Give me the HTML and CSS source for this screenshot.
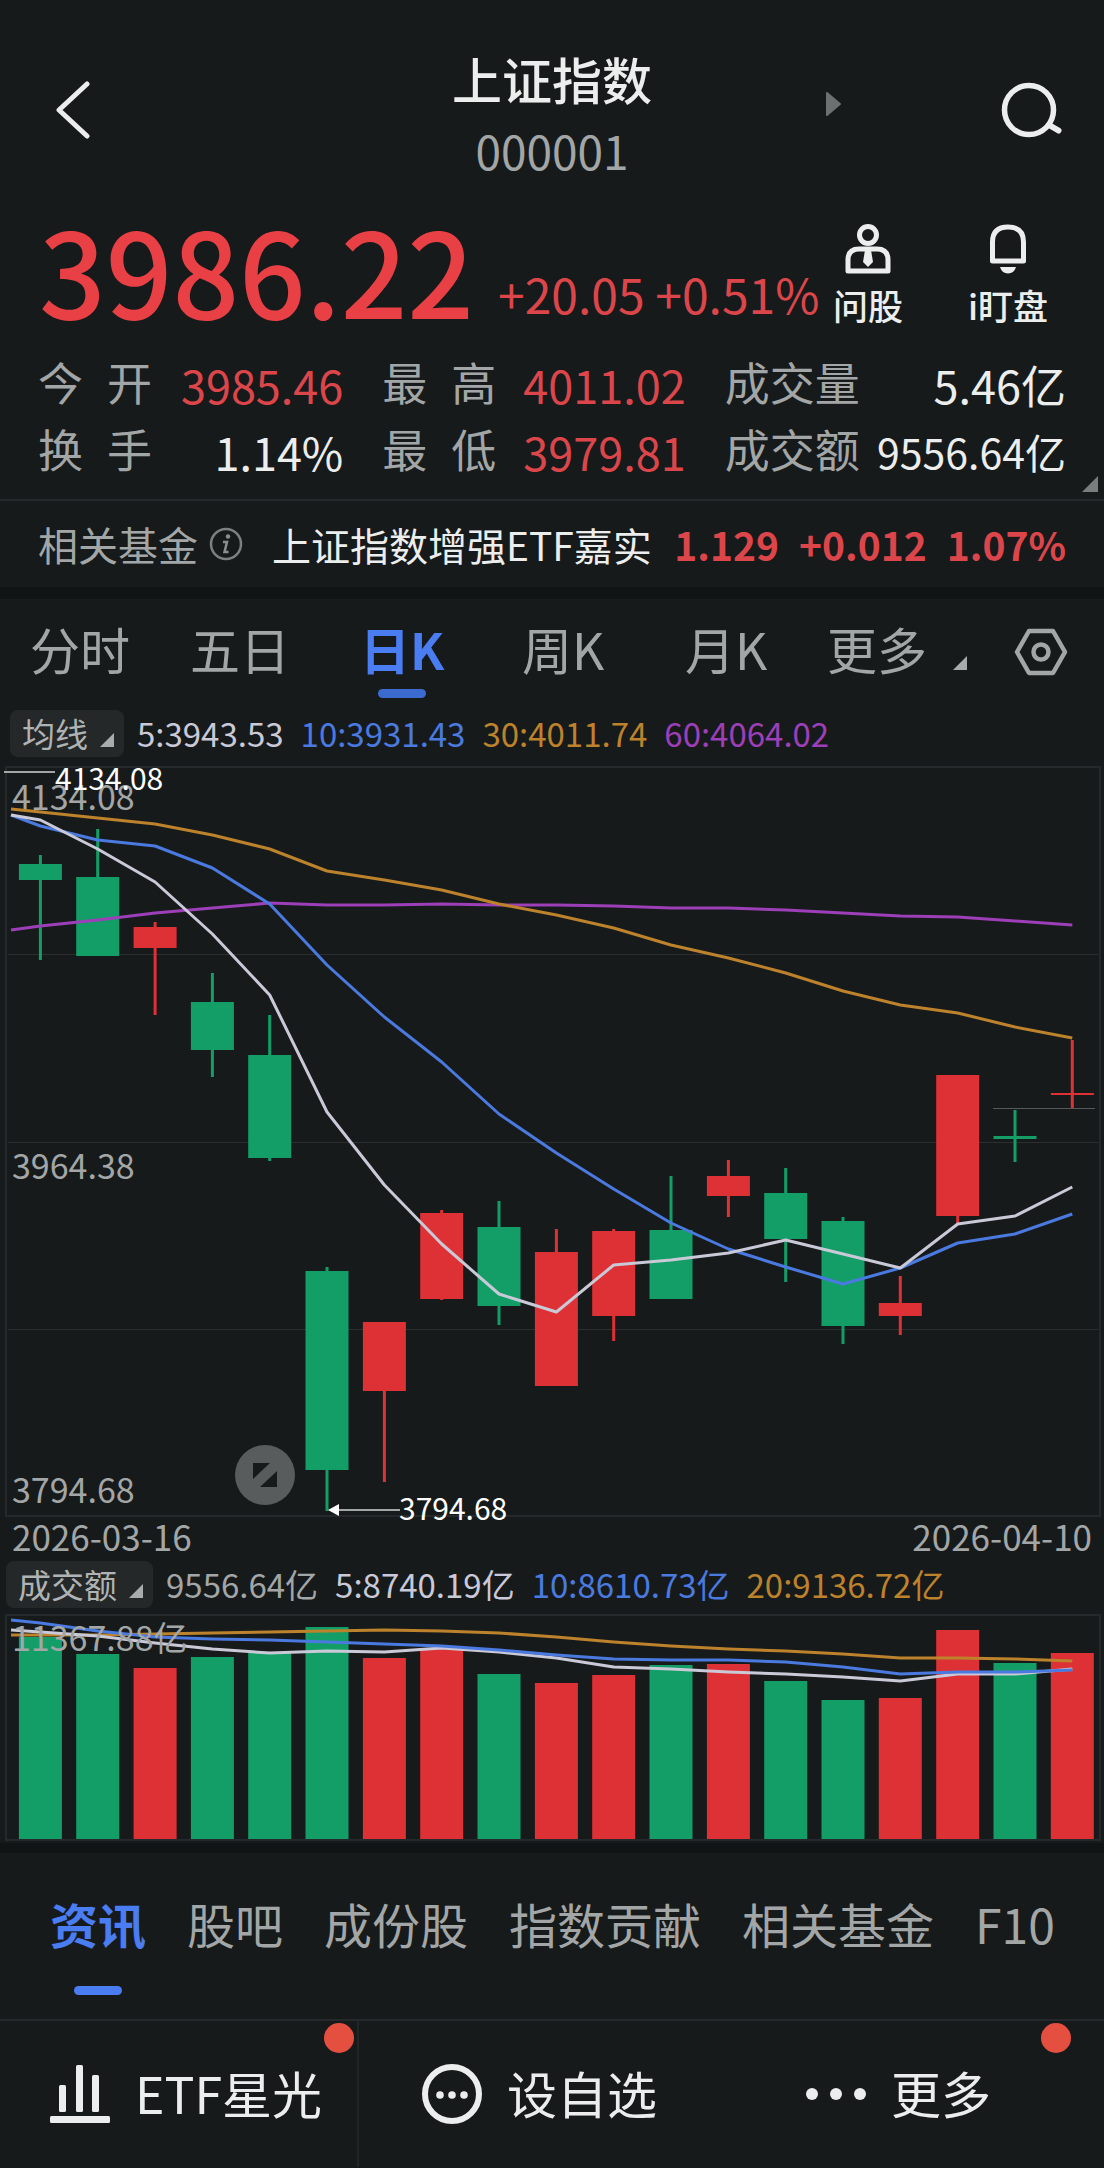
FILE: index.html
```html
<!DOCTYPE html>
<html lang="zh-CN">
	<head>
		<meta charset="utf-8">
		<meta name="viewport" content="width=device-width, initial-scale=1">
		<title>上证指数 000001</title>
		<link rel="stylesheet" href="styles.css">
	</head>
	<body>
		<header class="head">
			<button class="iconBtn back" aria-label="返回">
				<svg width="36" height="60" viewBox="0 0 36 60"><path d="M33 4L5 30L33 56" fill="none" stroke="#eceeee" stroke-width="5" stroke-linecap="round" stroke-linejoin="round"/></svg>
			</button>
			<div class="title">
				<h1>上证指数</h1>
				<p>000001</p>
			</div>
			<button class="iconBtn next" aria-label="下一只">
				<svg width="17" height="26" viewBox="0 0 17 26"><path d="M2 2L15 13L2 24Z" fill="#6d7070" stroke="#6d7070" stroke-width="2" stroke-linejoin="round"/></svg>
			</button>
			<button class="iconBtn search" aria-label="搜索">
				<svg width="62" height="58" viewBox="0 0 62 58"><circle cx="29" cy="29" r="24.5" fill="none" stroke="#eceeee" stroke-width="5.5"/><path d="M49 44L58.500 49.500" stroke="#eceeee" stroke-width="6" stroke-linecap="round"/></svg>
			</button>
		</header>

		<section class="price">
			<strong>3986.22</strong>
			<span class="change">+20.05 +0.51%</span>
			<div class="tools">
				<button>
					<svg width="50" height="52" viewBox="0 0 50 52"><g fill="none" stroke="#eceeee" stroke-width="5" stroke-linejoin="round"><circle cx="25" cy="13" r="8.500"/><path d="M5 49V38Q5 27 16 27H34Q45 27 45 38V49Z"/></g><path d="M22 28H28L30 40L25 45L20 40Z" fill="#eceeee"/></svg>
					<span>问股</span>
				</button>
				<button>
					<svg width="50" height="52" viewBox="0 0 50 52"><path d="M9.500 39V20Q9.500 5 25 5Q40.500 5 40.500 20V39Z" fill="none" stroke="#eceeee" stroke-width="5" stroke-linejoin="round"/><path d="M17 45H33Q31 51.500 25 51.500Q19 51.500 17 45Z" fill="#eceeee"/></svg>
					<span>i盯盘</span>
				</button>
			</div>
		</section>

		<dl class="stats">
			<div><dt><span>今</span><span>开</span></dt><dd class="up">3985.46</dd></div>
			<div><dt><span>最</span><span>高</span></dt><dd class="up">4011.02</dd></div>
			<div><dt>成交量</dt><dd>5.46亿</dd></div>
			<div><dt><span>换</span><span>手</span></dt><dd>1.14%</dd></div>
			<div><dt><span>最</span><span>低</span></dt><dd class="up">3979.81</dd></div>
			<div><dt>成交额</dt><dd class="long">9556.64亿</dd></div>
		</dl>

		<a class="fund" href="#fund">
			<span class="fundLabel">相关基金</span>
			<svg class="info" width="36" height="36" viewBox="0 0 36 36"><circle cx="18" cy="18" r="15" fill="none" stroke="#7d8080" stroke-width="2.500"/><circle cx="20" cy="10.500" r="2.200" fill="#8b8e8e"/><path d="M15 16H19L16.500 26H20.500" fill="none" stroke="#8b8e8e" stroke-width="2.500"/></svg>
			<span class="fundName">上证指数增强ETF嘉实</span>
			<span class="fundData"><b>1.129</b><b>+0.012</b><b>1.07%</b></span>
		</a>

		<nav class="period">
			<a href="#m">分时</a>
			<a href="#5d">五日</a>
			<a href="#dk" class="on">日K</a>
			<a href="#wk">周K</a>
			<a href="#mk">月K</a>
			<a href="#more">更多<i class="tri"></i></a>
			<button class="iconBtn set" aria-label="设置">
				<svg width="54" height="50" viewBox="0 0 54 50"><path d="M3 25L15 4H39L51 25L39 46H15Z" fill="none" stroke="#a3a6a6" stroke-width="4.500" stroke-linejoin="round"/><circle cx="27" cy="25" r="7.500" fill="none" stroke="#a3a6a6" stroke-width="4.500"/></svg>
			</button>
		</nav>

		<div class="legend">
			<button class="pick">均线<i class="tri"></i></button>
			<span class="ma5">5:3943.53</span>
			<span class="ma10">10:3931.43</span>
			<span class="ma30">30:4011.74</span>
			<span class="ma60">60:4064.02</span>
		</div>
		<svg id="kline" class="chart" viewBox="0 0 1104 752"></svg>
		<div class="dates"><span>2026-03-16</span><span>2026-04-10</span></div>

		<div class="legend vol">
			<button class="pick">成交额<i class="tri"></i></button>
			<span>9556.64亿</span>
			<span class="ma5">5:8740.19亿</span>
			<span class="ma10">10:8610.73亿</span>
			<span class="ma30">20:9136.72亿</span>
		</div>
		<svg id="volume" class="chart" viewBox="0 0 1104 230"></svg>

		<nav class="news">
			<a href="#news" class="on">资讯</a>
			<a href="#bar">股吧</a>
			<a href="#part">成份股</a>
			<a href="#contrib">指数贡献</a>
			<a href="#funds">相关基金</a>
			<a href="#f10">F10</a>
		</nav>

		<footer class="foot">
			<button class="etf">
				<svg width="60" height="60" viewBox="0 0 60 60"><g fill="#eceeee"><rect x="9" y="21" width="7" height="27" rx="1.500"/><rect x="26" y="1" width="7" height="47" rx="1.500"/><rect x="42" y="11" width="7" height="37" rx="1.500"/><rect y="52" width="60" height="7" rx="1.500"/></g></svg>
				<span>ETF星光</span><i class="dot"></i>
			</button>
			<button class="mine">
				<svg width="60" height="60" viewBox="0 0 60 60"><circle cx="30" cy="30" r="27" fill="none" stroke="#eceeee" stroke-width="6"/><g fill="#eceeee"><circle cx="18" cy="31" r="3.800"/><circle cx="30" cy="31" r="3.800"/><circle cx="42" cy="31" r="3.800"/></g></svg>
				<span>设自选</span>
			</button>
			<button class="more">
				<svg width="60" height="60" viewBox="0 0 60 60"><g fill="#eceeee"><circle cx="6" cy="30" r="6"/><circle cx="30" cy="30" r="6"/><circle cx="54" cy="30" r="6"/></g></svg>
				<span>更多</span><i class="dot"></i>
			</button>
		</footer>

		<script>
			const GREEN="#139e68",RED="#de3135"
			const COLORS={ma5:"#c9c9d8",ma10:"#4a7ae0",ma30:"#bd822c",ma60:"#9c3fb8"}
			//每根K线: 涨跌,最高,实体上沿,实体下沿,最低
			const days=[
				[0,90,99,115,195],[0,64,112,191,191],[1,157,162,183,250],[0,208,237,285,312],
				[0,250,290,393,396],[0,502,506,705,746],[1,557,557,626,717],[1,445,448,534,535],
				[0,436,462,541,560],[1,464,487,621,621],[1,464,466,551,576],[0,411,465,534,534],
				[1,395,411,431,452],[0,403,428,474,517],[0,452,456,561,579],[1,511,538,551,570],
				[1,310,310,451,459],[0,345,371,374,397],[1,275,328,330,343]
			]
			//第一个值是左边缘的起点
			const ma={
				ma60:[165,161,155,148,143,138,140,140,139,140,140,141,143,143,145,148,151,152,156,160],
				ma30:[44,47,53,59,70,84,106,115,125,139,150,163,180,193,208,226,240,248,262,273],
				ma10:[50,61,75,81,103,139,200,252,297,349,388,424,458,484,502,519,503,478,469,449],
				ma5:[50,55,84,117,169,230,347,420,479,529,547,500,495,488,475,489,503,459,451,422]
			}
			const vols=[24,41,55,44,40,14,45,36,61,70,62,52,51,68,87,85,17,50,40]
			const vma={
				ma30:[22,22,22,21,20,19,18,17,18,20,24,29,33,36,38,41,45,45,46,48],
				ma5:[17,19,23,30,36,40,38,39,35,39,45,54,56,59,61,64,68,61,61,56],
				ma10:[7,10,18,24,26,27,29,31,33,37,42,46,47,47,49,54,61,59,59,57]
			}
			const cx=i=>(40.4+i*57.33).toFixed(1)
			const rect=(x,y,w,h,c)=>`<rect x="${x}" y="${y}" width="${w}" height="${h}" fill="${c}"/>`
			const text=(x,y,s,c)=>`<text x="${x}" y="${y}" class="${c}">${s}</text>`
			const frame=(h)=>`<rect x="6" y="2" width="1094" height="${h}" fill="none" stroke="#26292b" stroke-width="2"/>`
			function lines(set){
				let html=""
				for(const k in set){
					const pts=set[k].map((y,i)=>(i?cx(i-1):11)+","+y).join(" ")
					html+=`<polyline points="${pts}" fill="none" stroke="${COLORS[k]}" stroke-width="3" stroke-linejoin="round"/>`
				}
				return html
			}
			function drawKline(){
				let html=frame(749)
				for(const y of [189,377,564]) html+=rect(8,y,1090,1,"#2b2f30")
				html+=text(12,45,"4134.08","axis")+text(12,414,"3964.38","axis")+text(12,738,"3794.68","axis")
				html+=rect(993,343,102,1,"#55595a")
				days.forEach((d,i)=>{
					const c=d[0]?RED:GREEN
					html+=rect(cx(i)-1.5,d[1],3,d[4]-d[1],c)+rect(cx(i)-21.5,d[2],43,d[3]-d[2],c)
				})
				html+=lines(ma)
				//最高、最低价标注
				html+=rect(4,6,51,2,"#a3a6a6")+text(55,25,"4134.08","mark")
				html+=rect(337,744,63,2,"#a3a6a6")+`<path d="M328 745L339 739V751Z" fill="#fff"/>`+text(399,755,"3794.68","mark")
				html+=`<circle cx="265" cy="710" r="30" fill="#595c5c"/><path d="M253 698H270L253 714ZM277 722H260L277 706Z" fill="#171a1b"/>`
				kline.innerHTML=html
			}
			function drawVolume(){
				let html=frame(225)
				vols.forEach((y,i)=>html+=rect(cx(i)-21.5,y,43,226-y,days[i][0]?RED:GREEN))
				html+=lines(vma)+text(12,38,"11367.88亿","axis")
				volume.innerHTML=html
			}
			drawKline()
			drawVolume()
		</script>
	</body>
</html>
```
FILE: styles.css
```css
*{box-sizing:border-box;}
body{
	margin:0;
	background:#171a1b;
	color:#eceeee;
	font-family:"Noto Sans CJK SC",sans-serif;
}
a{color:inherit;text-decoration:none;}
button{
	margin:0;
	padding:0;
	border:0;
	background:none;
	color:inherit;
	font:inherit;
	cursor:pointer;
}
svg{display:block;flex:none;}
.up{color:#dc464b;}
.ma5{color:#c9c9d8;}
.ma10{color:#4a7ae0;}
.ma30{color:#bd822c;}
.ma60{color:#9c3fb8;}
.tri{
	display:inline-block;
	width:14px;height:14px;
	background:#a9acac;
	clip-path:polygon(100% 0,100% 100%,0 100%);
}
/* 顶部标题 */
.head{
	position:relative;
	display:grid;
	grid-template-columns:1fr 220px 1fr;
	padding:46px 54px 33px;
}
.title{text-align:center;}
.title h1{margin:0;font-size:50px;line-height:64px;font-weight:500;}
.title p{margin:15px 0 0;font-size:46px;line-height:50px;color:#a3a6a6;}
.back{justify-self:start;align-self:start;padding-top:34px;}
.next{justify-self:start;align-self:start;padding:45px 0 0 163px;}
.search{position:absolute;right:42px;top:81px;}
/* 最新价 */
.price{
	display:flex;
	align-items:flex-end;
	padding:0 56px 0 39px;
	color:#e84045;
}
.price strong{font-size:117px;line-height:120px;font-weight:500;}
.change{
	margin-left:24px;
	padding-bottom:5px;
	font-size:48px;line-height:60px;
	color:#dc464b;
	white-space:nowrap;
}
.tools{
	display:flex;
	gap:65px;
	margin-left:auto;
	color:#eceeee;
	font-size:35px;line-height:46px;font-weight:500;
}
.tools button{display:flex;flex-direction:column;align-items:center;gap:8px;white-space:nowrap;}
/* 行情数据 */
.stats{
	display:grid;
	grid-template-columns:305fr 303fr 341fr;
	column-gap:39px;
	margin:20px 0 0;
	padding:0 38px 17px;
	font-size:45px;line-height:67px;
	position:relative;
}
.stats::after{
	content:"";
	position:absolute;
	right:6px;bottom:7px;
	width:16px;height:16px;
	background:#7a7d7e;
	clip-path:polygon(100% 0,100% 100%,0 100%);
}
.stats div{display:flex;justify-content:space-between;height:67px;white-space:nowrap;}
.stats dt{display:flex;gap:24px;color:#a3a6a6;}
.stats dd{margin:0;padding-top:3px;}
.stats .long{font-size:41px;}
/* 相关基金 */
.fund{
	display:flex;
	align-items:center;
	padding:0 38px;
	border-top:2px solid #26292b;
	border-bottom:12px solid #111415;
	font-size:39px;line-height:86px;
	white-space:nowrap;
}
.fundLabel{font-size:40px;color:#a3a6a6;}
.info{margin:0 28px 0 10px;}
.fundData{display:flex;gap:20px;margin-left:auto;color:#dc464b;}
/* 周期切换 */
.period{
	display:grid;
	grid-template-columns:160fr 170fr 162fr 163fr 142fr 187fr 90fr;
	align-items:center;
	padding-left:30px;
	color:#a3a6a6;
	font-size:50px;line-height:99px;
	white-space:nowrap;
}
.period a,.news a{position:relative;justify-self:start;}
.period .tri{margin-left:26px;}
.period .set{padding-top:6px;}
.period .on,.news .on{color:#4a7cf2;font-weight:700;}
.on::after{
	content:"";
	position:absolute;
	left:50%;bottom:0;
	width:48px;height:9px;
	margin-left:-24px;
	border-radius:5px;
	background:#3c6bd0;
}
/* 均线与成交额图例 */
.legend{
	display:flex;
	align-items:center;
	gap:17px;
	margin-top:12px;
	padding:0 10px 8px;
	font-size:33px;line-height:47px;
	white-space:nowrap;
}
.pick{
	margin-right:-4px;
	padding:0 10px 0 12px;
	border-radius:8px;
	background:#242829;
	color:#b0b3b3;
}
.pick .tri{margin-left:12px;}
.vol{margin-top:0;padding:0 6px 5px;color:#a3a6a6;}
.chart{width:100%;height:auto;overflow:visible;}
.axis{font-size:34px;fill:#a3a6a6;}
.mark{font-size:30px;fill:#fff;}
.dates{
	display:flex;
	justify-content:space-between;
	padding:0 12px 6px;
	font-size:35px;line-height:38px;
	color:#a3a6a6;
}
/* 资讯栏 */
.news{
	display:flex;
	gap:41px;
	padding:3px 50px 28px;
	border-top:10px solid #111415;
	border-bottom:2px solid #26292b;
	color:#a3a6a6;
	font-size:48px;line-height:135px;
	white-space:nowrap;
}
.news .on::after{bottom:-4px;background:#4a7cf2;}
/* 底部操作栏 */
.foot{
	display:grid;
	grid-template-columns:359fr 387fr 358fr;
	font-size:50px;line-height:146px;
}
.foot button{
	position:relative;
	display:flex;
	align-items:center;
	gap:25px;
	height:146px;
	white-space:nowrap;
}
.foot span{padding-bottom:5px;}
.foot .etf{padding-left:50px;border-right:2px solid #222526;}
.foot .mine{padding-left:63px;}
.foot .more{padding-left:60px;}
.dot{
	position:absolute;
	top:2px;right:3px;
	width:30px;height:30px;
	border-radius:50%;
	background:#e54f40;
}
.more .dot{right:33px;}
```
